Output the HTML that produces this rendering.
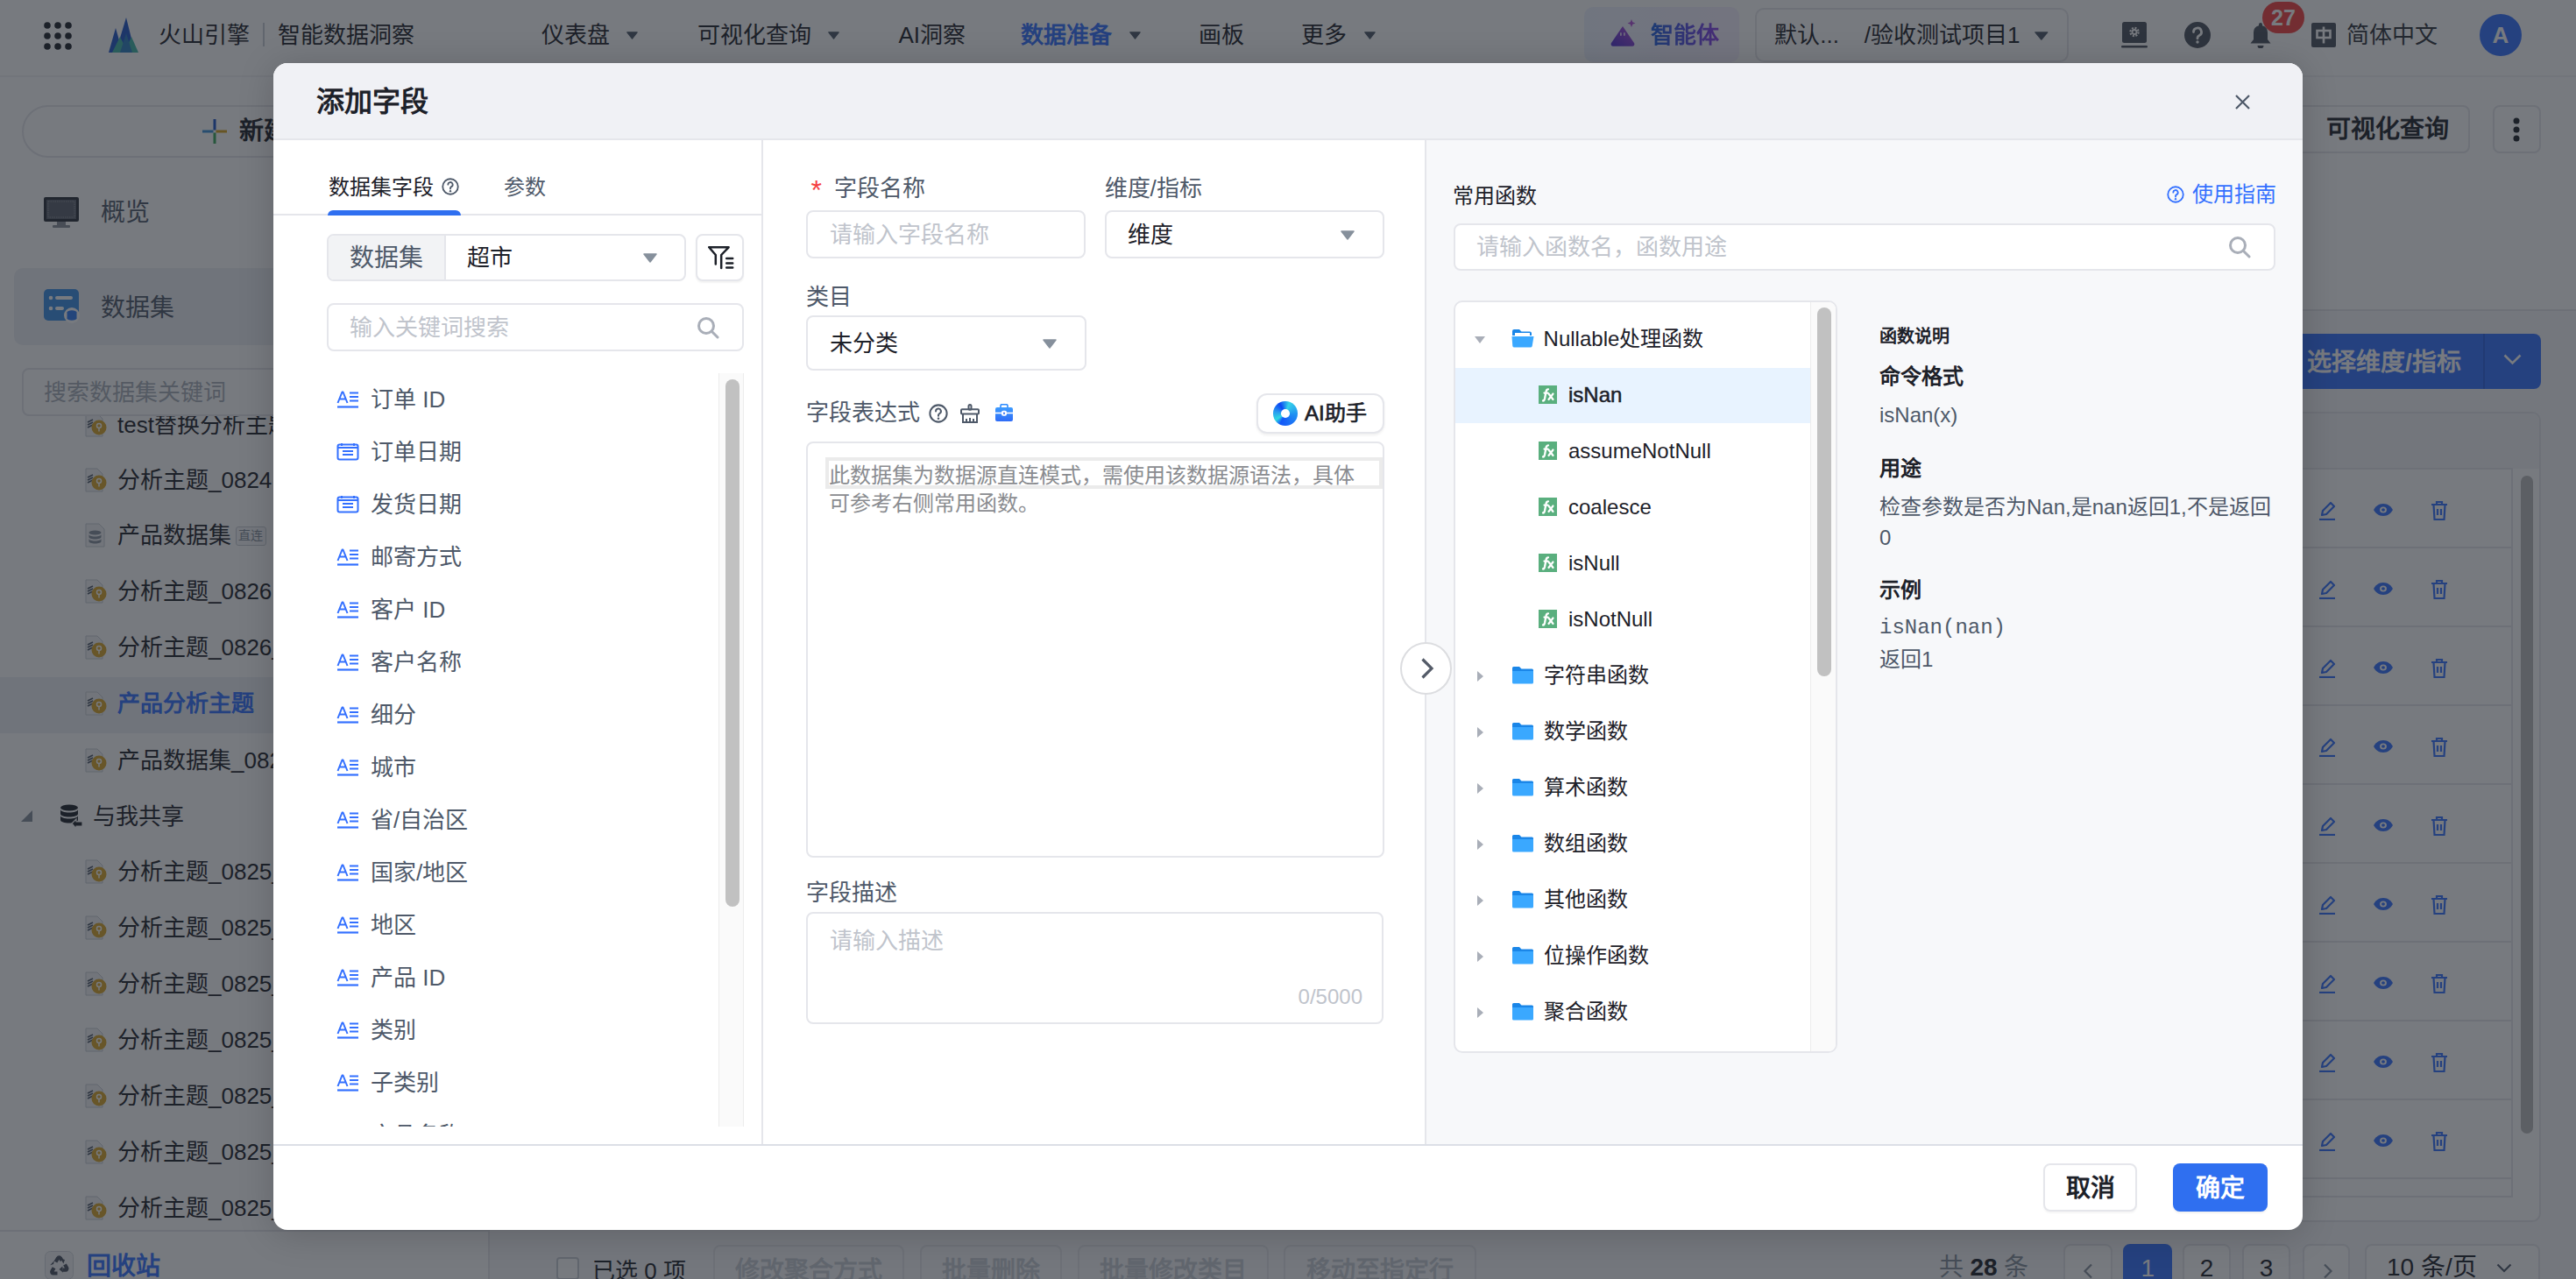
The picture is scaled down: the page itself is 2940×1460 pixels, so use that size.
<!DOCTYPE html>
<html lang="zh-CN"><head><meta charset="utf-8">
<style>
*{box-sizing:border-box;margin:0;padding:0}
html,body{width:2940px;height:1460px;overflow:hidden;background:#f7f8fa;font-family:"Liberation Sans",sans-serif;color:#1d2129}
.a{position:absolute;white-space:nowrap}
#page{position:absolute;left:0;top:0;width:2940px;height:1460px}
#mask{position:absolute;left:0;top:0;width:2940px;height:1460px;background:rgba(29,33,41,0.6)}
#modal{position:absolute;left:312px;top:72px;width:2316px;height:1332px;background:#fff;border-radius:16px;overflow:hidden;box-shadow:0 4px 40px rgba(0,0,0,0.18)}
</style></head><body>
<div id="page">
  <!-- NAV -->
  <div class="a" style="left:0;top:0;width:2940px;height:88px;background:#fff;border-bottom:2px solid #f2f3f5"></div>
  <!-- SIDEBAR -->
  <div class="a" style="left:0;top:88px;width:559px;height:1372px;background:#fff;border-right:2px solid #e5e6eb"></div>
<!--PAGE-CONTENT-->
<svg class="a" style="left:50px;top:24.5px" width="32" height="32" viewBox="0 0 32 32" fill="#1d2129"><circle cx="4" cy="4" r="3.8"/><circle cx="4" cy="16" r="3.8"/><circle cx="4" cy="28" r="3.8"/><circle cx="16" cy="4" r="3.8"/><circle cx="16" cy="16" r="3.8"/><circle cx="16" cy="28" r="3.8"/><circle cx="28" cy="4" r="3.8"/><circle cx="28" cy="16" r="3.8"/><circle cx="28" cy="28" r="3.8"/></svg>
<svg class="a" style="left:124px;top:20px" width="34" height="40" viewBox="0 0 34 40"><path d="M0 40L8 12L16 40z" fill="#1f56c9"/><path d="M8 40L20 0L30 40z" fill="#1f56c9"/><path d="M4 40L13 22L22 40z" fill="#40b5a6"/><path d="M18 40L26 22L34 40z" fill="#40b5a6"/><path d="M13 40L20 18L27 40z" fill="#2c7dbd"/></svg>
<div class="a" style="left:181px;top:20.0px;font-size:26px;line-height:40px;color:#1d2129;font-weight:500;">火山引擎</div>
<div class="a" style="left:300px;top:26px;width:2px;height:27px;background:#c9cdd4"></div>
<div class="a" style="left:317px;top:20.0px;font-size:26px;line-height:40px;color:#1d2129;font-weight:400;">智能数据洞察</div>
<div class="a" style="left:618.4px;top:20.0px;font-size:26px;line-height:40px;color:#1d2129;font-weight:400;">仪表盘</div>
<svg class="a" style="left:715.4px;top:35.5px" width="13" height="9" viewBox="0 0 16 11" preserveAspectRatio="none"><path d="M1 1h14l-7 9z" fill="#4e5969" stroke="#4e5969" stroke-width="1.5" stroke-linejoin="round"/></svg>
<div class="a" style="left:796px;top:20.0px;font-size:26px;line-height:40px;color:#1d2129;font-weight:400;">可视化查询</div>
<svg class="a" style="left:945px;top:35.5px" width="13" height="9" viewBox="0 0 16 11" preserveAspectRatio="none"><path d="M1 1h14l-7 9z" fill="#4e5969" stroke="#4e5969" stroke-width="1.5" stroke-linejoin="round"/></svg>
<div class="a" style="left:1025.5px;top:20.0px;font-size:26px;line-height:40px;color:#1d2129;font-weight:400;">AI洞察</div>
<div class="a" style="left:1165px;top:20.0px;font-size:26px;line-height:40px;color:#3370ff;font-weight:600;">数据准备</div>
<svg class="a" style="left:1289px;top:35.5px" width="13" height="9" viewBox="0 0 16 11" preserveAspectRatio="none"><path d="M1 1h14l-7 9z" fill="#4e5969" stroke="#4e5969" stroke-width="1.5" stroke-linejoin="round"/></svg>
<div class="a" style="left:1368px;top:20.0px;font-size:26px;line-height:40px;color:#1d2129;font-weight:400;">画板</div>
<div class="a" style="left:1485.2px;top:20.0px;font-size:26px;line-height:40px;color:#1d2129;font-weight:400;">更多</div>
<svg class="a" style="left:1557px;top:35.5px" width="13" height="9" viewBox="0 0 16 11" preserveAspectRatio="none"><path d="M1 1h14l-7 9z" fill="#4e5969" stroke="#4e5969" stroke-width="1.5" stroke-linejoin="round"/></svg>
<div class="a" style="left:1808px;top:8px;width:177px;height:63px;border-radius:10px;background:linear-gradient(90deg,#eef3ff,#f5efff)"></div>
<svg class="a" style="left:1838px;top:21.5px" width="29" height="31" viewBox="0 0 29 31"><defs><linearGradient id="ag" x1="0" y1="1" x2="1" y2="0"><stop offset="0" stop-color="#4b2fd0"/><stop offset="1" stop-color="#b04fd8"/></linearGradient></defs><path d="M14 8L1 27a2.5 2.5 0 0 0 2 3.8h22a2.5 2.5 0 0 0 2-3.8z" fill="url(#ag)"/><path d="M24 0l1.3 3.2L28.5 4.5l-3.2 1.3L24 9l-1.3-3.2L19.5 4.5l3.2-1.3z" fill="#b04fd8"/><rect x="11" y="15" width="1.8" height="4" rx="0.9" fill="#fff" opacity="0.8"/><rect x="15" y="15" width="1.8" height="4" rx="0.9" fill="#fff" opacity="0.8"/></svg>
<div class="a" style="left:1884px;top:19.6px;font-size:26px;line-height:40px;color:#5a3fe0;font-weight:700;background:linear-gradient(90deg,#1e62e0,#8a3ee8);-webkit-background-clip:text;background-clip:text;-webkit-text-fill-color:transparent;">智能体</div>
<div class="a" style="left:2003px;top:8.7px;width:358px;height:62.3px;border:2px solid #e5e6eb;border-radius:10px;background:#fff"></div>
<div class="a" style="left:2025.2px;top:20.0px;font-size:26px;line-height:40px;color:#1d2129;font-weight:400;">默认...&nbsp;&nbsp;&nbsp;&nbsp;/验收测试项目1</div>
<svg class="a" style="left:2322px;top:35.5px" width="15.7" height="10" viewBox="0 0 16 11" preserveAspectRatio="none"><path d="M1 1h14l-7 9z" fill="#4e5969" stroke="#4e5969" stroke-width="1.5" stroke-linejoin="round"/></svg>
<svg class="a" style="left:2421px;top:24.8px" width="30" height="30" viewBox="0 0 30 30"><rect x="1" y="0" width="28" height="24" rx="2.5" fill="#4a505c"/><rect x="0" y="27" width="30" height="2.6" rx="1.3" fill="#4a505c"/><circle cx="15" cy="11.5" r="4.6" fill="none" stroke="#fff" stroke-width="2.2" stroke-dasharray="2 1.6"/><circle cx="15" cy="11.5" r="3.4" fill="#fff"/><circle cx="15" cy="11.5" r="1.5" fill="#4a505c"/></svg>
<svg class="a" style="left:2493px;top:24.8px" width="30" height="30" viewBox="0 0 30 30"><circle cx="15" cy="15" r="15" fill="#4a505c"/><path d="M10.5 11.5a4.5 4.5 0 1 1 6.5 4c-1.3.7-2 1.4-2 2.8v.6" fill="none" stroke="#fff" stroke-width="2.8" stroke-linecap="round"/><circle cx="15" cy="23" r="1.7" fill="#fff"/></svg>
<svg class="a" style="left:2568px;top:25px" width="24" height="30" viewBox="0 0 24 30"><path d="M12 1a2 2 0 0 1 2 2v1.2a8 8 0 0 1 6 7.8v8l3.5 4.5H0.5L4 20v-8a8 8 0 0 1 6-7.8V3a2 2 0 0 1 2-2z" fill="#4a505c"/><path d="M8.5 27h7a3.5 3.5 0 0 1-7 0z" fill="#4a505c"/></svg>
<div class="a" style="left:2582px;top:2px;width:48px;height:36px;border-radius:18px;background:#f53f3f;color:#fff;font-size:25px;font-weight:700;line-height:36px;text-align:center">27</div>
<div class="a" style="left:2638px;top:25.8px;width:28px;height:28px;border-radius:2px;background:#4a505c"></div>
<svg class="a" style="left:2638px;top:25.8px" width="28" height="28" viewBox="0 0 28 28" fill="none" stroke="#fff" stroke-width="2.6"><rect x="6.5" y="9" width="15" height="8"/><path d="M14 4.5v19"/></svg>
<div class="a" style="left:2678px;top:20.0px;font-size:26px;line-height:40px;color:#2e333b;font-weight:400;">简体中文</div>
<div class="a" style="left:2830px;top:16px;width:48px;height:48px;border-radius:50%;background:#3370ff;color:#fff;font-size:26px;line-height:48px;text-align:center;font-weight:600">A</div>
<div class="a" style="left:24.5px;top:120px;width:510px;height:60px;border:2px solid #e5e6eb;border-radius:30px;background:#fff"></div>
<svg class="a" style="left:231px;top:135.5px" width="28" height="28" viewBox="0 0 28 28"><rect x="12.5" y="0" width="3" height="12.5" fill="#1f56c9"/><rect x="15.5" y="12.5" width="12.5" height="3" fill="#d8a21c"/><rect x="12.5" y="15.5" width="3" height="12.5" fill="#3aa85a"/><rect x="0" y="12.5" width="12.5" height="3" fill="#3a8fd8"/></svg>
<div class="a" style="left:273px;top:129.5px;font-size:28px;line-height:40px;color:#1d2129;font-weight:700;">新建数据集</div>
<svg class="a" style="left:50px;top:225px" width="40" height="35" viewBox="0 0 40 35"><rect x="0" y="0" width="40" height="28" rx="2" fill="#2a2f38"/><rect x="3" y="3" width="34" height="22" fill="#5a606b"/><rect x="5" y="5" width="30" height="18" fill="none" stroke="#9aa0a8" stroke-width="0.8" stroke-dasharray="1.5 1"/><rect x="15" y="28" width="10" height="4" fill="#8a9099"/><rect x="10" y="32" width="20" height="3" rx="1" fill="#8a9099"/></svg>
<div class="a" style="left:115px;top:222.5px;font-size:28px;line-height:40px;color:#4e5969;font-weight:400;">概览</div>
<div class="a" style="left:16px;top:306px;width:600px;height:87.5px;border-radius:10px;background:#eef0f4"></div>
<svg class="a" style="left:50px;top:330px" width="42" height="40" viewBox="0 0 42 40"><rect x="0" y="0" width="40" height="36" rx="5" fill="#3a8ee6"/><circle cx="8" cy="10" r="2.3" fill="#fff"/><rect x="13" y="8" width="20" height="4" rx="2" fill="#fff"/><circle cx="8" cy="22" r="2.3" fill="#fff"/><rect x="13" y="20" width="10" height="4" rx="2" fill="#fff"/><circle cx="32" cy="30" r="9" fill="#fff"/><ellipse cx="32" cy="26.5" rx="5.5" ry="2.2" fill="#2e7cf6"/><rect x="26.5" y="26.5" width="11" height="7" fill="#2e7cf6"/><ellipse cx="32" cy="33.5" rx="5.5" ry="2.2" fill="#2e7cf6"/></svg>
<div class="a" style="left:115px;top:331.5px;font-size:28px;line-height:40px;color:#4e5969;font-weight:400;">数据集</div>
<div class="a" style="left:0;top:475px;width:559px;height:929px;overflow:hidden">
<div class="a" style="left:0;top:297.5px;width:559px;height:64px;background:#eef0f4"></div>
<svg class="a" style="left:96px;top:-4px" width="27" height="28" viewBox="0 0 27 28"><path d="M2 1h13l6 6v20H2z" fill="#f2f3f5" stroke="#c9cdd4" stroke-width="1"/><path d="M4 11l6-3M4 14l6-3M4 17l6-3" stroke="#4e5969" stroke-width="1.6"/><circle cx="17" cy="17" r="8.5" fill="#d9a628"/><circle cx="17" cy="15" r="2.5" fill="none" stroke="#fff" stroke-width="1.5"/><path d="M17 17.5v4" stroke="#fff" stroke-width="1.5"/></svg>
<div class="a" style="left:134px;top:-10.0px;font-size:26px;line-height:40px;color:#1d2129;font-weight:400;">test替换分析主题</div>
<svg class="a" style="left:96px;top:58.5px" width="27" height="28" viewBox="0 0 27 28"><path d="M2 1h13l6 6v20H2z" fill="#f2f3f5" stroke="#c9cdd4" stroke-width="1"/><path d="M4 11l6-3M4 14l6-3M4 17l6-3" stroke="#4e5969" stroke-width="1.6"/><circle cx="17" cy="17" r="8.5" fill="#d9a628"/><circle cx="17" cy="15" r="2.5" fill="none" stroke="#fff" stroke-width="1.5"/><path d="M17 17.5v4" stroke="#fff" stroke-width="1.5"/></svg>
<div class="a" style="left:134px;top:52.5px;font-size:26px;line-height:40px;color:#1d2129;font-weight:400;">分析主题_0824</div>
<svg class="a" style="left:96px;top:122px" width="27" height="28" viewBox="0 0 27 28"><path d="M2 1h15l6 6v20H2z" fill="#f2f3f5" stroke="#c9cdd4" stroke-width="1"/><ellipse cx="12.5" cy="11" rx="7" ry="2.5" fill="#86909c"/><path d="M5.5 13c0 1.4 3 2.5 7 2.5s7-1.1 7-2.5v3c0 1.4-3 2.5-7 2.5s-7-1.1-7-2.5z" fill="#86909c"/><path d="M5.5 18c0 1.4 3 2.5 7 2.5s7-1.1 7-2.5v3c0 1.4-3 2.5-7 2.5s-7-1.1-7-2.5z" fill="#86909c"/></svg>
<div class="a" style="left:134px;top:116.0px;font-size:26px;line-height:40px;color:#1d2129;font-weight:400;">产品数据集</div>
<svg class="a" style="left:96px;top:186px" width="27" height="28" viewBox="0 0 27 28"><path d="M2 1h13l6 6v20H2z" fill="#f2f3f5" stroke="#c9cdd4" stroke-width="1"/><path d="M4 11l6-3M4 14l6-3M4 17l6-3" stroke="#4e5969" stroke-width="1.6"/><circle cx="17" cy="17" r="8.5" fill="#d9a628"/><circle cx="17" cy="15" r="2.5" fill="none" stroke="#fff" stroke-width="1.5"/><path d="M17 17.5v4" stroke="#fff" stroke-width="1.5"/></svg>
<div class="a" style="left:134px;top:180.0px;font-size:26px;line-height:40px;color:#1d2129;font-weight:400;">分析主题_0826</div>
<svg class="a" style="left:96px;top:250px" width="27" height="28" viewBox="0 0 27 28"><path d="M2 1h13l6 6v20H2z" fill="#f2f3f5" stroke="#c9cdd4" stroke-width="1"/><path d="M4 11l6-3M4 14l6-3M4 17l6-3" stroke="#4e5969" stroke-width="1.6"/><circle cx="17" cy="17" r="8.5" fill="#d9a628"/><circle cx="17" cy="15" r="2.5" fill="none" stroke="#fff" stroke-width="1.5"/><path d="M17 17.5v4" stroke="#fff" stroke-width="1.5"/></svg>
<div class="a" style="left:134px;top:244.0px;font-size:26px;line-height:40px;color:#1d2129;font-weight:400;">分析主题_0826_1</div>
<svg class="a" style="left:96px;top:314px" width="27" height="28" viewBox="0 0 27 28"><path d="M2 1h13l6 6v20H2z" fill="#f2f3f5" stroke="#c9cdd4" stroke-width="1"/><path d="M4 11l6-3M4 14l6-3M4 17l6-3" stroke="#4e5969" stroke-width="1.6"/><circle cx="17" cy="17" r="8.5" fill="#d9a628"/><circle cx="17" cy="15" r="2.5" fill="none" stroke="#fff" stroke-width="1.5"/><path d="M17 17.5v4" stroke="#fff" stroke-width="1.5"/></svg>
<div class="a" style="left:134px;top:308.0px;font-size:26px;line-height:40px;color:#3370ff;font-weight:700;">产品分析主题</div>
<svg class="a" style="left:96px;top:378.70000000000005px" width="27" height="28" viewBox="0 0 27 28"><path d="M2 1h13l6 6v20H2z" fill="#f2f3f5" stroke="#c9cdd4" stroke-width="1"/><path d="M4 11l6-3M4 14l6-3M4 17l6-3" stroke="#4e5969" stroke-width="1.6"/><circle cx="17" cy="17" r="8.5" fill="#d9a628"/><circle cx="17" cy="15" r="2.5" fill="none" stroke="#fff" stroke-width="1.5"/><path d="M17 17.5v4" stroke="#fff" stroke-width="1.5"/></svg>
<div class="a" style="left:134px;top:372.7px;font-size:26px;line-height:40px;color:#1d2129;font-weight:400;">产品数据集_0826</div>
<div class="a" style="left:268.5px;top:126px;width:35px;height:22px;border:1.5px solid #c9cdd4;border-radius:3px;font-size:14px;line-height:19px;text-align:center;color:#86909c;background:#f7f8fa">直连</div>
<svg class="a" style="left:24px;top:449.5px" width="13" height="13" viewBox="0 0 13 13"><path d="M13 0v13H0z" fill="#86909c"/></svg>
<svg class="a" style="left:68px;top:443px" width="27" height="28" viewBox="0 0 27 28"><ellipse cx="11" cy="4" rx="10" ry="3.5" fill="#1d2129"/><path d="M1 6c0 2 4.5 3.5 10 3.5S21 8 21 6v5c0 2-4.5 3.5-10 3.5S1 13 1 11z" fill="#1d2129"/><path d="M1 13c0 2 4.5 3.5 10 3.5S21 15 21 13v5c0 2-4.5 3.5-10 3.5S1 20 1 18z" fill="#1d2129"/><path d="M14 22l5-5v3h7v5h-7v3z" fill="#1d2129" stroke="#fff" stroke-width="1.2"/></svg>
<div class="a" style="left:106px;top:436.5px;font-size:26px;line-height:40px;color:#1d2129;font-weight:400;">与我共享</div>
<svg class="a" style="left:96px;top:506px" width="27" height="28" viewBox="0 0 27 28"><path d="M2 1h13l6 6v20H2z" fill="#f2f3f5" stroke="#c9cdd4" stroke-width="1"/><path d="M4 11l6-3M4 14l6-3M4 17l6-3" stroke="#4e5969" stroke-width="1.6"/><circle cx="17" cy="17" r="8.5" fill="#d9a628"/><circle cx="17" cy="15" r="2.5" fill="none" stroke="#fff" stroke-width="1.5"/><path d="M17 17.5v4" stroke="#fff" stroke-width="1.5"/></svg>
<div class="a" style="left:134px;top:500.0px;font-size:26px;line-height:40px;color:#1d2129;font-weight:400;">分析主题_0825_1</div>
<svg class="a" style="left:96px;top:570px" width="27" height="28" viewBox="0 0 27 28"><path d="M2 1h13l6 6v20H2z" fill="#f2f3f5" stroke="#c9cdd4" stroke-width="1"/><path d="M4 11l6-3M4 14l6-3M4 17l6-3" stroke="#4e5969" stroke-width="1.6"/><circle cx="17" cy="17" r="8.5" fill="#d9a628"/><circle cx="17" cy="15" r="2.5" fill="none" stroke="#fff" stroke-width="1.5"/><path d="M17 17.5v4" stroke="#fff" stroke-width="1.5"/></svg>
<div class="a" style="left:134px;top:564.0px;font-size:26px;line-height:40px;color:#1d2129;font-weight:400;">分析主题_0825_2</div>
<svg class="a" style="left:96px;top:634px" width="27" height="28" viewBox="0 0 27 28"><path d="M2 1h13l6 6v20H2z" fill="#f2f3f5" stroke="#c9cdd4" stroke-width="1"/><path d="M4 11l6-3M4 14l6-3M4 17l6-3" stroke="#4e5969" stroke-width="1.6"/><circle cx="17" cy="17" r="8.5" fill="#d9a628"/><circle cx="17" cy="15" r="2.5" fill="none" stroke="#fff" stroke-width="1.5"/><path d="M17 17.5v4" stroke="#fff" stroke-width="1.5"/></svg>
<div class="a" style="left:134px;top:628.0px;font-size:26px;line-height:40px;color:#1d2129;font-weight:400;">分析主题_0825_3</div>
<svg class="a" style="left:96px;top:698px" width="27" height="28" viewBox="0 0 27 28"><path d="M2 1h13l6 6v20H2z" fill="#f2f3f5" stroke="#c9cdd4" stroke-width="1"/><path d="M4 11l6-3M4 14l6-3M4 17l6-3" stroke="#4e5969" stroke-width="1.6"/><circle cx="17" cy="17" r="8.5" fill="#d9a628"/><circle cx="17" cy="15" r="2.5" fill="none" stroke="#fff" stroke-width="1.5"/><path d="M17 17.5v4" stroke="#fff" stroke-width="1.5"/></svg>
<div class="a" style="left:134px;top:692.0px;font-size:26px;line-height:40px;color:#1d2129;font-weight:400;">分析主题_0825_4</div>
<svg class="a" style="left:96px;top:762px" width="27" height="28" viewBox="0 0 27 28"><path d="M2 1h13l6 6v20H2z" fill="#f2f3f5" stroke="#c9cdd4" stroke-width="1"/><path d="M4 11l6-3M4 14l6-3M4 17l6-3" stroke="#4e5969" stroke-width="1.6"/><circle cx="17" cy="17" r="8.5" fill="#d9a628"/><circle cx="17" cy="15" r="2.5" fill="none" stroke="#fff" stroke-width="1.5"/><path d="M17 17.5v4" stroke="#fff" stroke-width="1.5"/></svg>
<div class="a" style="left:134px;top:756.0px;font-size:26px;line-height:40px;color:#1d2129;font-weight:400;">分析主题_0825_5</div>
<svg class="a" style="left:96px;top:826px" width="27" height="28" viewBox="0 0 27 28"><path d="M2 1h13l6 6v20H2z" fill="#f2f3f5" stroke="#c9cdd4" stroke-width="1"/><path d="M4 11l6-3M4 14l6-3M4 17l6-3" stroke="#4e5969" stroke-width="1.6"/><circle cx="17" cy="17" r="8.5" fill="#d9a628"/><circle cx="17" cy="15" r="2.5" fill="none" stroke="#fff" stroke-width="1.5"/><path d="M17 17.5v4" stroke="#fff" stroke-width="1.5"/></svg>
<div class="a" style="left:134px;top:820.0px;font-size:26px;line-height:40px;color:#1d2129;font-weight:400;">分析主题_0825_6</div>
<svg class="a" style="left:96px;top:890px" width="27" height="28" viewBox="0 0 27 28"><path d="M2 1h13l6 6v20H2z" fill="#f2f3f5" stroke="#c9cdd4" stroke-width="1"/><path d="M4 11l6-3M4 14l6-3M4 17l6-3" stroke="#4e5969" stroke-width="1.6"/><circle cx="17" cy="17" r="8.5" fill="#d9a628"/><circle cx="17" cy="15" r="2.5" fill="none" stroke="#fff" stroke-width="1.5"/><path d="M17 17.5v4" stroke="#fff" stroke-width="1.5"/></svg>
<div class="a" style="left:134px;top:884.0px;font-size:26px;line-height:40px;color:#1d2129;font-weight:400;">分析主题_0825_7</div>
</div>
<div class="a" style="left:25px;top:420px;width:520px;height:55px;border:2px solid #e5e6eb;border-radius:8px;background:#fff"></div>
<div class="a" style="left:50px;top:427.5px;font-size:26px;line-height:40px;color:#a9aeb8;font-weight:400;">搜索数据集关键词</div>
<div class="a" style="left:0;top:1404px;width:559px;height:2px;background:#e5e6eb"></div>
<svg class="a" style="left:50.5px;top:1428px" width="33" height="33" viewBox="0 0 33 33"><rect x="0.5" y="0.5" width="32" height="32" rx="6" fill="#f2f3f5" stroke="#d5d8de"/><g fill="none" stroke="#4a5160" stroke-width="4.2" stroke-linejoin="round"><path d="M12.5 12.5l2.6-4.3a1.6 1.6 0 0 1 2.8 0l1.6 2.6"/><path d="M23 15.5l2.2 3.8a1.6 1.6 0 0 1-1.4 2.4h-3.2"/><path d="M14.5 25.5H9.8a1.6 1.6 0 0 1-1.4-2.4l2.2-3.8"/></g><path d="M18 8.5l5 1.5-1.6 4.6z M16.5 21l3.8-3.4 0.8 7.2z M10 15l-3.8 1.2 4.8-5.2z" fill="#4a5160"/></svg>
<div class="a" style="left:99px;top:1425.5px;font-size:28px;line-height:40px;color:#3370ff;font-weight:700;">回收站</div>
<div class="a" style="left:561px;top:88px;width:2379px;height:266.5px;background:#fff;border-bottom:2px solid #e5e6eb"></div>
<div class="a" style="left:2500px;top:120.4px;width:319px;height:54.5px;border:2px solid #e5e6eb;border-radius:8px;background:#fff"></div>
<div class="a" style="left:2655px;top:127.6px;font-size:28px;line-height:40px;color:#1d2129;font-weight:700;">可视化查询</div>
<div class="a" style="left:2844.6px;top:120.4px;width:55px;height:54.5px;border:2px solid #e5e6eb;border-radius:8px;background:#fff"></div>
<svg class="a" style="left:2867px;top:134px" width="10" height="28" viewBox="0 0 10 28" fill="#1d2129"><circle cx="5" cy="4" r="3.5"/><circle cx="5" cy="14" r="3.5"/><circle cx="5" cy="24" r="3.5"/></svg>
<div class="a" style="left:2400px;top:380.7px;width:499.6px;height:63px;border-radius:8px;background:#3370ff"></div>
<div class="a" style="left:2834px;top:380.7px;width:2px;height:63px;background:#2a5fe0"></div>
<div class="a" style="left:2633px;top:394.0px;font-size:28px;line-height:40px;color:#fff;font-weight:700;">选择维度/指标</div>
<svg class="a" style="left:2856.7px;top:404px" width="21" height="13" viewBox="0 0 21 13" fill="none" stroke="#fff" stroke-width="2.6"><path d="M1.5 1.5l9 9 9-9"/></svg>
<div class="a" style="left:2400px;top:469.8px;width:499.5px;height:925.2px;border:2px solid #e5e6eb;border-radius:10px;background:#fff"></div>
<div class="a" style="left:2400px;top:471.8px;width:497.5px;height:63px;background:#f4f5f8;border-radius:0 8px 0 0"></div>
<div class="a" style="left:2400px;top:534px;width:468px;height:833px;border-top:2px solid #e5e6eb;border-right:2px solid #e5e6eb;border-bottom:2px solid #e5e6eb"></div>
<div class="a" style="left:2400px;top:624px;width:468px;height:2px;background:#e5e6eb"></div>
<div class="a" style="left:2400px;top:714px;width:468px;height:2px;background:#e5e6eb"></div>
<div class="a" style="left:2400px;top:804px;width:468px;height:2px;background:#e5e6eb"></div>
<div class="a" style="left:2400px;top:894px;width:468px;height:2px;background:#e5e6eb"></div>
<div class="a" style="left:2400px;top:984px;width:468px;height:2px;background:#e5e6eb"></div>
<div class="a" style="left:2400px;top:1074px;width:468px;height:2px;background:#e5e6eb"></div>
<div class="a" style="left:2400px;top:1164px;width:468px;height:2px;background:#e5e6eb"></div>
<div class="a" style="left:2400px;top:1254px;width:468px;height:2px;background:#e5e6eb"></div>
<div class="a" style="left:2400px;top:1344px;width:468px;height:2px;background:#e5e6eb"></div>
<svg class="a" style="left:2646px;top:572.0px" width="20" height="22" viewBox="0 0 20 22" fill="none" stroke="#3370ff" stroke-width="2.2"><path d="M4 16l1-5L14 2l4 4-9 9z" stroke-linejoin="round"/><path d="M1 21h18"/></svg>
<svg class="a" style="left:2708px;top:573.5px" width="24" height="16" viewBox="0 0 22 16" preserveAspectRatio="none"><path d="M11 1C6 1 2.5 4.5 1 8c1.5 3.5 5 7 10 7s8.5-3.5 10-7C19.5 4.5 16 1 11 1z" fill="#3370ff"/><circle cx="11" cy="8" r="3.6" fill="#fff"/><circle cx="11" cy="8" r="1.8" fill="#3370ff"/></svg>
<svg class="a" style="left:2774.4px;top:571.0px" width="20" height="24" viewBox="0 0 20 24" fill="none" stroke="#3370ff" stroke-width="2.2"><path d="M1 5h18M7 5V2h6v3M3.5 5l1 17h11l1-17M8 10v7M12 10v7"/></svg>
<svg class="a" style="left:2646px;top:662.0px" width="20" height="22" viewBox="0 0 20 22" fill="none" stroke="#3370ff" stroke-width="2.2"><path d="M4 16l1-5L14 2l4 4-9 9z" stroke-linejoin="round"/><path d="M1 21h18"/></svg>
<svg class="a" style="left:2708px;top:663.5px" width="24" height="16" viewBox="0 0 22 16" preserveAspectRatio="none"><path d="M11 1C6 1 2.5 4.5 1 8c1.5 3.5 5 7 10 7s8.5-3.5 10-7C19.5 4.5 16 1 11 1z" fill="#3370ff"/><circle cx="11" cy="8" r="3.6" fill="#fff"/><circle cx="11" cy="8" r="1.8" fill="#3370ff"/></svg>
<svg class="a" style="left:2774.4px;top:661.0px" width="20" height="24" viewBox="0 0 20 24" fill="none" stroke="#3370ff" stroke-width="2.2"><path d="M1 5h18M7 5V2h6v3M3.5 5l1 17h11l1-17M8 10v7M12 10v7"/></svg>
<svg class="a" style="left:2646px;top:752.0px" width="20" height="22" viewBox="0 0 20 22" fill="none" stroke="#3370ff" stroke-width="2.2"><path d="M4 16l1-5L14 2l4 4-9 9z" stroke-linejoin="round"/><path d="M1 21h18"/></svg>
<svg class="a" style="left:2708px;top:753.5px" width="24" height="16" viewBox="0 0 22 16" preserveAspectRatio="none"><path d="M11 1C6 1 2.5 4.5 1 8c1.5 3.5 5 7 10 7s8.5-3.5 10-7C19.5 4.5 16 1 11 1z" fill="#3370ff"/><circle cx="11" cy="8" r="3.6" fill="#fff"/><circle cx="11" cy="8" r="1.8" fill="#3370ff"/></svg>
<svg class="a" style="left:2774.4px;top:751.0px" width="20" height="24" viewBox="0 0 20 24" fill="none" stroke="#3370ff" stroke-width="2.2"><path d="M1 5h18M7 5V2h6v3M3.5 5l1 17h11l1-17M8 10v7M12 10v7"/></svg>
<svg class="a" style="left:2646px;top:842.0px" width="20" height="22" viewBox="0 0 20 22" fill="none" stroke="#3370ff" stroke-width="2.2"><path d="M4 16l1-5L14 2l4 4-9 9z" stroke-linejoin="round"/><path d="M1 21h18"/></svg>
<svg class="a" style="left:2708px;top:843.5px" width="24" height="16" viewBox="0 0 22 16" preserveAspectRatio="none"><path d="M11 1C6 1 2.5 4.5 1 8c1.5 3.5 5 7 10 7s8.5-3.5 10-7C19.5 4.5 16 1 11 1z" fill="#3370ff"/><circle cx="11" cy="8" r="3.6" fill="#fff"/><circle cx="11" cy="8" r="1.8" fill="#3370ff"/></svg>
<svg class="a" style="left:2774.4px;top:841.0px" width="20" height="24" viewBox="0 0 20 24" fill="none" stroke="#3370ff" stroke-width="2.2"><path d="M1 5h18M7 5V2h6v3M3.5 5l1 17h11l1-17M8 10v7M12 10v7"/></svg>
<svg class="a" style="left:2646px;top:932.0px" width="20" height="22" viewBox="0 0 20 22" fill="none" stroke="#3370ff" stroke-width="2.2"><path d="M4 16l1-5L14 2l4 4-9 9z" stroke-linejoin="round"/><path d="M1 21h18"/></svg>
<svg class="a" style="left:2708px;top:933.5px" width="24" height="16" viewBox="0 0 22 16" preserveAspectRatio="none"><path d="M11 1C6 1 2.5 4.5 1 8c1.5 3.5 5 7 10 7s8.5-3.5 10-7C19.5 4.5 16 1 11 1z" fill="#3370ff"/><circle cx="11" cy="8" r="3.6" fill="#fff"/><circle cx="11" cy="8" r="1.8" fill="#3370ff"/></svg>
<svg class="a" style="left:2774.4px;top:931.0px" width="20" height="24" viewBox="0 0 20 24" fill="none" stroke="#3370ff" stroke-width="2.2"><path d="M1 5h18M7 5V2h6v3M3.5 5l1 17h11l1-17M8 10v7M12 10v7"/></svg>
<svg class="a" style="left:2646px;top:1022.0px" width="20" height="22" viewBox="0 0 20 22" fill="none" stroke="#3370ff" stroke-width="2.2"><path d="M4 16l1-5L14 2l4 4-9 9z" stroke-linejoin="round"/><path d="M1 21h18"/></svg>
<svg class="a" style="left:2708px;top:1023.5px" width="24" height="16" viewBox="0 0 22 16" preserveAspectRatio="none"><path d="M11 1C6 1 2.5 4.5 1 8c1.5 3.5 5 7 10 7s8.5-3.5 10-7C19.5 4.5 16 1 11 1z" fill="#3370ff"/><circle cx="11" cy="8" r="3.6" fill="#fff"/><circle cx="11" cy="8" r="1.8" fill="#3370ff"/></svg>
<svg class="a" style="left:2774.4px;top:1021.0px" width="20" height="24" viewBox="0 0 20 24" fill="none" stroke="#3370ff" stroke-width="2.2"><path d="M1 5h18M7 5V2h6v3M3.5 5l1 17h11l1-17M8 10v7M12 10v7"/></svg>
<svg class="a" style="left:2646px;top:1112.0px" width="20" height="22" viewBox="0 0 20 22" fill="none" stroke="#3370ff" stroke-width="2.2"><path d="M4 16l1-5L14 2l4 4-9 9z" stroke-linejoin="round"/><path d="M1 21h18"/></svg>
<svg class="a" style="left:2708px;top:1113.5px" width="24" height="16" viewBox="0 0 22 16" preserveAspectRatio="none"><path d="M11 1C6 1 2.5 4.5 1 8c1.5 3.5 5 7 10 7s8.5-3.5 10-7C19.5 4.5 16 1 11 1z" fill="#3370ff"/><circle cx="11" cy="8" r="3.6" fill="#fff"/><circle cx="11" cy="8" r="1.8" fill="#3370ff"/></svg>
<svg class="a" style="left:2774.4px;top:1111.0px" width="20" height="24" viewBox="0 0 20 24" fill="none" stroke="#3370ff" stroke-width="2.2"><path d="M1 5h18M7 5V2h6v3M3.5 5l1 17h11l1-17M8 10v7M12 10v7"/></svg>
<svg class="a" style="left:2646px;top:1202.0px" width="20" height="22" viewBox="0 0 20 22" fill="none" stroke="#3370ff" stroke-width="2.2"><path d="M4 16l1-5L14 2l4 4-9 9z" stroke-linejoin="round"/><path d="M1 21h18"/></svg>
<svg class="a" style="left:2708px;top:1203.5px" width="24" height="16" viewBox="0 0 22 16" preserveAspectRatio="none"><path d="M11 1C6 1 2.5 4.5 1 8c1.5 3.5 5 7 10 7s8.5-3.5 10-7C19.5 4.5 16 1 11 1z" fill="#3370ff"/><circle cx="11" cy="8" r="3.6" fill="#fff"/><circle cx="11" cy="8" r="1.8" fill="#3370ff"/></svg>
<svg class="a" style="left:2774.4px;top:1201.0px" width="20" height="24" viewBox="0 0 20 24" fill="none" stroke="#3370ff" stroke-width="2.2"><path d="M1 5h18M7 5V2h6v3M3.5 5l1 17h11l1-17M8 10v7M12 10v7"/></svg>
<svg class="a" style="left:2646px;top:1292.0px" width="20" height="22" viewBox="0 0 20 22" fill="none" stroke="#3370ff" stroke-width="2.2"><path d="M4 16l1-5L14 2l4 4-9 9z" stroke-linejoin="round"/><path d="M1 21h18"/></svg>
<svg class="a" style="left:2708px;top:1293.5px" width="24" height="16" viewBox="0 0 22 16" preserveAspectRatio="none"><path d="M11 1C6 1 2.5 4.5 1 8c1.5 3.5 5 7 10 7s8.5-3.5 10-7C19.5 4.5 16 1 11 1z" fill="#3370ff"/><circle cx="11" cy="8" r="3.6" fill="#fff"/><circle cx="11" cy="8" r="1.8" fill="#3370ff"/></svg>
<svg class="a" style="left:2774.4px;top:1291.0px" width="20" height="24" viewBox="0 0 20 24" fill="none" stroke="#3370ff" stroke-width="2.2"><path d="M1 5h18M7 5V2h6v3M3.5 5l1 17h11l1-17M8 10v7M12 10v7"/></svg>
<div class="a" style="left:2876.6px;top:543px;width:14.4px;height:751px;border-radius:7px;background:#bcbcbc"></div>
<div class="a" style="left:634.7px;top:1435px;width:26.3px;height:26px;border:2px solid #c9cdd4;border-radius:4px;background:#fff"></div>
<div class="a" style="left:676px;top:1431.0px;font-size:26px;line-height:40px;color:#1d2129;font-weight:400;">已选 0 项</div>
<div class="a" style="left:813.5px;top:1420.8px;width:218.9px;height:56px;border:2px solid #e5e6eb;border-radius:8px;background:#f7f8fa;font-size:28px;font-weight:700;line-height:56px;text-align:center;color:#c9cdd4">修改聚合方式</div>
<div class="a" style="left:1050px;top:1420.8px;width:162.0px;height:56px;border:2px solid #e5e6eb;border-radius:8px;background:#f7f8fa;font-size:28px;font-weight:700;line-height:56px;text-align:center;color:#c9cdd4">批量删除</div>
<div class="a" style="left:1230px;top:1420.8px;width:218.0px;height:56px;border:2px solid #e5e6eb;border-radius:8px;background:#f7f8fa;font-size:28px;font-weight:700;line-height:56px;text-align:center;color:#c9cdd4">批量修改类目</div>
<div class="a" style="left:1464.5px;top:1420.8px;width:220.0px;height:56px;border:2px solid #e5e6eb;border-radius:8px;background:#f7f8fa;font-size:28px;font-weight:700;line-height:56px;text-align:center;color:#c9cdd4">移动至指定行</div>
<div class="a" style="left:2212.7px;top:1427.0px;font-size:28px;line-height:40px;color:#86909c;font-weight:400;">共 <b style="color:#1d2129">28</b> 条</div>
<div class="a" style="left:2355px;top:1420px;width:56.0px;height:56px;border:2px solid #e5e6eb;border-radius:8px;background:#fff;font-size:28px;line-height:52px;text-align:center;color:#86909c"><svg style="position:absolute;left:20px;top:20px" width="12" height="18" viewBox="0 0 12 18" fill="none" stroke="#86909c" stroke-width="2.2"><path d="M10 1.5L2.5 9l7.5 7.5"/></svg></div>
<div class="a" style="left:2423.4px;top:1420px;width:55.9px;height:56px;border:2px solid #3370ff;border-radius:8px;background:#3370ff;font-size:28px;line-height:52px;text-align:center;color:#fff">1</div>
<div class="a" style="left:2491px;top:1420px;width:55.0px;height:56px;border:2px solid #e5e6eb;border-radius:8px;background:#fff;font-size:28px;line-height:52px;text-align:center;color:#1d2129">2</div>
<div class="a" style="left:2559px;top:1420px;width:55.0px;height:56px;border:2px solid #e5e6eb;border-radius:8px;background:#fff;font-size:28px;line-height:52px;text-align:center;color:#1d2129">3</div>
<div class="a" style="left:2627.5px;top:1420px;width:54.5px;height:56px;border:2px solid #e5e6eb;border-radius:8px;background:#fff;font-size:28px;line-height:52px;text-align:center;color:#86909c"><svg style="position:absolute;left:21px;top:20px" width="12" height="18" viewBox="0 0 12 18" fill="none" stroke="#86909c" stroke-width="2.2"><path d="M2 1.5L9.5 9 2 16.5"/></svg></div>
<div class="a" style="left:2699px;top:1420px;width:200px;height:56px;border:2px solid #e5e6eb;border-radius:8px;background:#fff"></div>
<div class="a" style="left:2724px;top:1427.0px;font-size:28px;line-height:40px;color:#1d2129;font-weight:400;">10 条/页</div>
<svg class="a" style="left:2849px;top:1442px" width="18" height="11" viewBox="0 0 18 11" fill="none" stroke="#4e5969" stroke-width="2.2"><path d="M1.5 1.5l7.5 7.5 7.5-7.5"/></svg>
<!--/PAGE-CONTENT-->
</div>
<div id="mask"></div>
<div id="modal">
  <div class="a" style="left:0;top:0;width:2316px;height:88px;background:#f0f1f5;border-bottom:2px solid #e5e6eb"></div>
  <div class="a" style="left:1314px;top:88px;width:1002px;height:1147px;background:#f7f8fa;border-left:2px solid #e5e6eb"></div>
  <div class="a" style="left:557px;top:88px;width:2px;height:1147px;background:#e5e6eb"></div>
  <div class="a" style="left:0;top:1234px;width:2316px;height:2px;background:#dcdfe6"></div>
<!--MODAL-CONTENT-->
<div class="a" style="left:49px;top:21.5px;font-size:32px;line-height:44px;color:#1d2129;font-weight:600;">添加字段</div>
<svg class="a" style="left:2239px;top:36px" width="17" height="17" viewBox="0 0 17 17" stroke="#4e5969" stroke-width="2.2"><path d="M1 1l15 15M16 1L1 16"/></svg>
<div class="a" style="left:63px;top:123.5px;font-size:24px;line-height:36px;color:#1d2129;font-weight:500;">数据集字段</div>
<svg class="a" style="left:191.7px;top:130.7px" width="20" height="20" viewBox="0 0 24 24" fill="none" stroke="#4e5969" stroke-width="2.2"><circle cx="12" cy="12" r="10.5"/><path d="M8.8 9.2a3.2 3.2 0 1 1 4.6 2.9c-.9.5-1.4 1-1.4 2v1" stroke-linecap="round"/><circle cx="12" cy="18.2" r="1.4" fill="#4e5969" stroke="none"/></svg>
<div class="a" style="left:263px;top:123.5px;font-size:24px;line-height:36px;color:#4e5969;font-weight:400;">参数</div>
<div class="a" style="left:0;top:172px;width:557px;height:2px;background:#e5e6eb"></div>
<div class="a" style="left:62px;top:168px;width:152px;height:6px;background:#2f6ff0;border-radius:6px 6px 0 0"></div>
<div class="a" style="left:61px;top:195px;width:410px;height:54px;border:2px solid #e5e6eb;border-radius:8px;overflow:hidden;background:#fff"><div style="position:absolute;left:0;top:0;width:134px;height:50px;background:#f2f3f5;border-right:2px solid #e5e6eb"></div></div>
<div class="a" style="left:87px;top:203.0px;font-size:28px;line-height:40px;color:#4e5969;font-weight:400;">数据集</div>
<div class="a" style="left:220.6px;top:202.0px;font-size:26px;line-height:40px;color:#1d2129;font-weight:400;">超市</div>
<svg class="a" style="left:421.7px;top:217.4px" width="16" height="11" viewBox="0 0 16 11"><path d="M1 1h14l-7 9z" fill="#86909c" stroke="#86909c" stroke-width="1.5" stroke-linejoin="round"/></svg>
<div class="a" style="left:482px;top:195px;width:55px;height:54px;border:2px solid #e5e6eb;border-radius:8px;background:#fff;box-shadow:0 2px 2px rgba(0,0,0,0.05)"></div>
<svg class="a" style="left:495.6px;top:208.7px" width="32" height="28" viewBox="0 0 32 28" fill="none" stroke="#1d2129" stroke-width="2.5" stroke-linecap="round" stroke-linejoin="round"><path d="M1.2 1.3H23.6L15.2 10V25M1.2 1.3L8.8 10V20.5"/><path d="M21.2 14.1h7M21.2 19.4h7M21.2 24.6h7"/></svg>
<div class="a" style="left:61px;top:274px;width:476px;height:55px;border:2px solid #e5e6eb;border-radius:8px;background:#fff"></div>
<div class="a" style="left:87px;top:281.5px;font-size:26px;line-height:40px;color:#c0c4cc;font-weight:400;">输入关键词搜索</div>
<svg class="a" style="left:483px;top:289px" width="26" height="26" viewBox="0 0 26 26" fill="none" stroke="#a9aeb8" stroke-width="3"><circle cx="11" cy="11" r="8.5"/><path d="M17.5 17.5l6.5 6.5" stroke-linecap="round"/></svg>
<div class="a" style="left:0;top:354px;width:557px;height:860px;overflow:hidden">
<svg class="a" style="left:71.6px;top:20px" width="26" height="20" viewBox="0 0 26 20" fill="none" stroke="#3370ff" stroke-width="2"><path d="M1.5 14L6.5 1.5h1L12.5 14M3.5 9.5h7" stroke-linejoin="round"/><path d="M15 2.5h10M15 7h10M15 11.5h10"/><path d="M1 18.5h24" stroke-width="2.2"/></svg>
<div class="a" style="left:111px;top:10.0px;font-size:26px;line-height:40px;color:#4e5969;font-weight:400;">订单 ID</div>
<svg class="a" style="left:71.6px;top:79px" width="26" height="21" viewBox="0 0 26 21" fill="none" stroke="#3370ff" stroke-width="2"><rect x="1.5" y="2.5" width="23" height="17" rx="2"/><path d="M6 1v3M20 1v3M1.5 6h23M7 10h12M7 14h12"/></svg>
<div class="a" style="left:111px;top:70.0px;font-size:26px;line-height:40px;color:#4e5969;font-weight:400;">订单日期</div>
<svg class="a" style="left:71.6px;top:139px" width="26" height="21" viewBox="0 0 26 21" fill="none" stroke="#3370ff" stroke-width="2"><rect x="1.5" y="2.5" width="23" height="17" rx="2"/><path d="M6 1v3M20 1v3M1.5 6h23M7 10h12M7 14h12"/></svg>
<div class="a" style="left:111px;top:130.0px;font-size:26px;line-height:40px;color:#4e5969;font-weight:400;">发货日期</div>
<svg class="a" style="left:71.6px;top:200px" width="26" height="20" viewBox="0 0 26 20" fill="none" stroke="#3370ff" stroke-width="2"><path d="M1.5 14L6.5 1.5h1L12.5 14M3.5 9.5h7" stroke-linejoin="round"/><path d="M15 2.5h10M15 7h10M15 11.5h10"/><path d="M1 18.5h24" stroke-width="2.2"/></svg>
<div class="a" style="left:111px;top:190.0px;font-size:26px;line-height:40px;color:#4e5969;font-weight:400;">邮寄方式</div>
<svg class="a" style="left:71.6px;top:260px" width="26" height="20" viewBox="0 0 26 20" fill="none" stroke="#3370ff" stroke-width="2"><path d="M1.5 14L6.5 1.5h1L12.5 14M3.5 9.5h7" stroke-linejoin="round"/><path d="M15 2.5h10M15 7h10M15 11.5h10"/><path d="M1 18.5h24" stroke-width="2.2"/></svg>
<div class="a" style="left:111px;top:250.0px;font-size:26px;line-height:40px;color:#4e5969;font-weight:400;">客户 ID</div>
<svg class="a" style="left:71.6px;top:320px" width="26" height="20" viewBox="0 0 26 20" fill="none" stroke="#3370ff" stroke-width="2"><path d="M1.5 14L6.5 1.5h1L12.5 14M3.5 9.5h7" stroke-linejoin="round"/><path d="M15 2.5h10M15 7h10M15 11.5h10"/><path d="M1 18.5h24" stroke-width="2.2"/></svg>
<div class="a" style="left:111px;top:310.0px;font-size:26px;line-height:40px;color:#4e5969;font-weight:400;">客户名称</div>
<svg class="a" style="left:71.6px;top:380px" width="26" height="20" viewBox="0 0 26 20" fill="none" stroke="#3370ff" stroke-width="2"><path d="M1.5 14L6.5 1.5h1L12.5 14M3.5 9.5h7" stroke-linejoin="round"/><path d="M15 2.5h10M15 7h10M15 11.5h10"/><path d="M1 18.5h24" stroke-width="2.2"/></svg>
<div class="a" style="left:111px;top:370.0px;font-size:26px;line-height:40px;color:#4e5969;font-weight:400;">细分</div>
<svg class="a" style="left:71.6px;top:440px" width="26" height="20" viewBox="0 0 26 20" fill="none" stroke="#3370ff" stroke-width="2"><path d="M1.5 14L6.5 1.5h1L12.5 14M3.5 9.5h7" stroke-linejoin="round"/><path d="M15 2.5h10M15 7h10M15 11.5h10"/><path d="M1 18.5h24" stroke-width="2.2"/></svg>
<div class="a" style="left:111px;top:430.0px;font-size:26px;line-height:40px;color:#4e5969;font-weight:400;">城市</div>
<svg class="a" style="left:71.6px;top:500px" width="26" height="20" viewBox="0 0 26 20" fill="none" stroke="#3370ff" stroke-width="2"><path d="M1.5 14L6.5 1.5h1L12.5 14M3.5 9.5h7" stroke-linejoin="round"/><path d="M15 2.5h10M15 7h10M15 11.5h10"/><path d="M1 18.5h24" stroke-width="2.2"/></svg>
<div class="a" style="left:111px;top:490.0px;font-size:26px;line-height:40px;color:#4e5969;font-weight:400;">省/自治区</div>
<svg class="a" style="left:71.6px;top:560px" width="26" height="20" viewBox="0 0 26 20" fill="none" stroke="#3370ff" stroke-width="2"><path d="M1.5 14L6.5 1.5h1L12.5 14M3.5 9.5h7" stroke-linejoin="round"/><path d="M15 2.5h10M15 7h10M15 11.5h10"/><path d="M1 18.5h24" stroke-width="2.2"/></svg>
<div class="a" style="left:111px;top:550.0px;font-size:26px;line-height:40px;color:#4e5969;font-weight:400;">国家/地区</div>
<svg class="a" style="left:71.6px;top:620px" width="26" height="20" viewBox="0 0 26 20" fill="none" stroke="#3370ff" stroke-width="2"><path d="M1.5 14L6.5 1.5h1L12.5 14M3.5 9.5h7" stroke-linejoin="round"/><path d="M15 2.5h10M15 7h10M15 11.5h10"/><path d="M1 18.5h24" stroke-width="2.2"/></svg>
<div class="a" style="left:111px;top:610.0px;font-size:26px;line-height:40px;color:#4e5969;font-weight:400;">地区</div>
<svg class="a" style="left:71.6px;top:680px" width="26" height="20" viewBox="0 0 26 20" fill="none" stroke="#3370ff" stroke-width="2"><path d="M1.5 14L6.5 1.5h1L12.5 14M3.5 9.5h7" stroke-linejoin="round"/><path d="M15 2.5h10M15 7h10M15 11.5h10"/><path d="M1 18.5h24" stroke-width="2.2"/></svg>
<div class="a" style="left:111px;top:670.0px;font-size:26px;line-height:40px;color:#4e5969;font-weight:400;">产品 ID</div>
<svg class="a" style="left:71.6px;top:740px" width="26" height="20" viewBox="0 0 26 20" fill="none" stroke="#3370ff" stroke-width="2"><path d="M1.5 14L6.5 1.5h1L12.5 14M3.5 9.5h7" stroke-linejoin="round"/><path d="M15 2.5h10M15 7h10M15 11.5h10"/><path d="M1 18.5h24" stroke-width="2.2"/></svg>
<div class="a" style="left:111px;top:730.0px;font-size:26px;line-height:40px;color:#4e5969;font-weight:400;">类别</div>
<svg class="a" style="left:71.6px;top:800px" width="26" height="20" viewBox="0 0 26 20" fill="none" stroke="#3370ff" stroke-width="2"><path d="M1.5 14L6.5 1.5h1L12.5 14M3.5 9.5h7" stroke-linejoin="round"/><path d="M15 2.5h10M15 7h10M15 11.5h10"/><path d="M1 18.5h24" stroke-width="2.2"/></svg>
<div class="a" style="left:111px;top:790.0px;font-size:26px;line-height:40px;color:#4e5969;font-weight:400;">子类别</div>
<svg class="a" style="left:71.6px;top:860px" width="26" height="20" viewBox="0 0 26 20" fill="none" stroke="#3370ff" stroke-width="2"><path d="M1.5 14L6.5 1.5h1L12.5 14M3.5 9.5h7" stroke-linejoin="round"/><path d="M15 2.5h10M15 7h10M15 11.5h10"/><path d="M1 18.5h24" stroke-width="2.2"/></svg>
<div class="a" style="left:111px;top:850.0px;font-size:26px;line-height:40px;color:#4e5969;font-weight:400;">产品名称</div>
<div class="a" style="left:508px;top:0;width:29px;height:860px;background:#fafafa;border-left:1px solid #ececec;border-right:1px solid #ececec"></div>
<div class="a" style="left:516px;top:7px;width:16px;height:602px;background:#c1c1c1;border-radius:8px"></div>
</div>
<div class="a" style="left:613.5px;top:125.0px;font-size:32px;line-height:40px;color:#f53f3f;font-weight:400;">*</div>
<div class="a" style="left:640px;top:123.0px;font-size:26px;line-height:40px;color:#4e5969;font-weight:400;">字段名称</div>
<div class="a" style="left:948.5px;top:123.0px;font-size:26px;line-height:40px;color:#4e5969;font-weight:400;">维度/指标</div>
<div class="a" style="left:608px;top:168px;width:319px;height:55px;border:2px solid #e5e6eb;border-radius:8px;background:#fff"></div>
<div class="a" style="left:635px;top:175.5px;font-size:26px;line-height:40px;color:#c0c4cc;font-weight:400;">请输入字段名称</div>
<div class="a" style="left:948.5px;top:168px;width:319px;height:55px;border:2px solid #e5e6eb;border-radius:8px;background:#fff"></div>
<div class="a" style="left:975px;top:175.5px;font-size:26px;line-height:40px;color:#1d2129;font-weight:400;">维度</div>
<svg class="a" style="left:1218px;top:190.5px" width="16" height="11" viewBox="0 0 16 11"><path d="M1 1h14l-7 9z" fill="#86909c" stroke="#86909c" stroke-width="1.5" stroke-linejoin="round"/></svg>
<div class="a" style="left:608px;top:246.5px;font-size:26px;line-height:40px;color:#4e5969;font-weight:400;">类目</div>
<div class="a" style="left:608px;top:288px;width:320px;height:63px;border:2px solid #e5e6eb;border-radius:8px;background:#fff"></div>
<div class="a" style="left:635px;top:300.0px;font-size:26px;line-height:40px;color:#1d2129;font-weight:400;">未分类</div>
<svg class="a" style="left:878px;top:314.5px" width="16" height="11" viewBox="0 0 16 11"><path d="M1 1h14l-7 9z" fill="#86909c" stroke="#86909c" stroke-width="1.5" stroke-linejoin="round"/></svg>
<div class="a" style="left:608px;top:379.0px;font-size:26px;line-height:40px;color:#4e5969;font-weight:400;">字段表达式</div>
<svg class="a" style="left:747.9px;top:388.9px" width="22" height="22" viewBox="0 0 24 24" fill="none" stroke="#4e5969" stroke-width="2.2"><circle cx="12" cy="12" r="10.5"/><path d="M8.8 9.2a3.2 3.2 0 1 1 4.6 2.9c-.9.5-1.4 1-1.4 2v1" stroke-linecap="round"/><circle cx="12" cy="18.2" r="1.4" fill="#4e5969" stroke="none"/></svg>
<svg class="a" style="left:784.2px;top:388.9px" width="22" height="22" viewBox="0 0 22 22" fill="none" stroke="#4e5969" stroke-width="2"><rect x="9.5" y="1" width="3" height="5.8" rx="1.5"/><rect x="1" y="6.3" width="20" height="5.2" rx="1"/><path d="M3 11.5V21h16v-9.5M7 21v-4M11 21v-5M15 21v-4"/></svg>
<svg class="a" style="left:824.1px;top:389px" width="20" height="20" viewBox="0 0 20 20"><defs><linearGradient id="tb" x1="0" y1="0" x2="0" y2="1"><stop offset="0" stop-color="#3d9bff"/><stop offset="1" stop-color="#2f6cf6"/></linearGradient></defs><path d="M6 4V2.2A1.5 1.5 0 0 1 7.5 0.7h5A1.5 1.5 0 0 1 14 2.2V4" fill="none" stroke="#2f8cff" stroke-width="1.6"/><rect x="0" y="4" width="20" height="16" rx="2" fill="url(#tb)"/><path d="M0 10.5h20" stroke="#fff" stroke-width="1.6"/><rect x="7" y="7.8" width="6" height="6" rx="2" fill="#fff"/><rect x="9.2" y="9.6" width="1.6" height="2.4" fill="#2f6cf6"/></svg>
<div class="a" style="left:1121.6px;top:376.6px;width:146px;height:46px;border:2px solid #e5e6eb;border-radius:12px;background:#fff;box-shadow:0 2px 3px rgba(0,0,0,0.06)"></div>
<div class="a" style="left:1141.2px;top:386.3px;width:27.5px;height:27.5px;border-radius:50%;background:conic-gradient(from 20deg,#36d2e8,#1f8ef2 22%,#1a6af7 40%,#1458f8 52%,#2fd8e2 60%,#2a9cef 72%,#0b46f4 86%,#36d2e8)"></div>
<div class="a" style="left:1150.1px;top:395.2px;width:9.7px;height:9.7px;border-radius:50%;background:#fff"></div>
<div class="a" style="left:1177px;top:380.4px;font-size:24px;line-height:40px;color:#1d2129;font-weight:500;-webkit-text-stroke:0.7px #1d2129;">AI助手</div>
<div class="a" style="left:608px;top:431.7px;width:659.5px;height:475px;border:2px solid #e5e6eb;border-radius:8px;background:#fff"></div>
<div class="a" style="left:630px;top:450.2px;width:636px;height:36px;background:#fff;border:4px solid #ebebeb"></div>
<div class="a" style="left:634px;top:454.6px;font-size:24px;line-height:32px;color:#8a8c90;font-weight:400;">此数据集为数据源直连模式，需使用该数据源语法，具体</div>
<div class="a" style="left:634px;top:487.0px;font-size:24px;line-height:32px;color:#8a8c90;font-weight:400;">可参考右侧常用函数。</div>
<div class="a" style="left:608px;top:926.6px;font-size:26px;line-height:40px;color:#4e5969;font-weight:400;">字段描述</div>
<div class="a" style="left:608px;top:969px;width:659px;height:127.5px;border:2px solid #e5e6eb;border-radius:8px;background:#fff"></div>
<div class="a" style="left:635px;top:981.6px;font-size:26px;line-height:40px;color:#c0c4cc;font-weight:400;">请输入描述</div>
<div class="a" style="left:1043px;top:1046px;width:200px;text-align:right;font-size:24px;line-height:40px;color:#c0c4cc">0/5000</div>
<div class="a" style="left:1286px;top:661px;width:59px;height:59.5px;border:2px solid #dcdde0;border-radius:50%;background:#fff"></div>
<svg class="a" style="left:1308px;top:678px" width="18" height="26" viewBox="0 0 18 26" fill="none" stroke="#545b68" stroke-width="3.2" stroke-linecap="butt"><path d="M3.5 2.5l10.5 10.5-10.5 10.5"/></svg>
<div class="a" style="left:1346px;top:132.0px;font-size:24px;line-height:40px;color:#1d2129;font-weight:400;">常用函数</div>
<svg class="a" style="left:2160.5px;top:140px" width="20" height="20" viewBox="0 0 24 24" fill="none" stroke="#3370ff" stroke-width="2.2"><circle cx="12" cy="12" r="10.5"/><path d="M8.8 9.2a3.2 3.2 0 1 1 4.6 2.9c-.9.5-1.4 1-1.4 2v1" stroke-linecap="round"/><circle cx="12" cy="18.2" r="1.4" fill="#3370ff" stroke="none"/></svg>
<div class="a" style="left:2190px;top:130.0px;font-size:24px;line-height:40px;color:#3370ff;font-weight:400;">使用指南</div>
<div class="a" style="left:1347px;top:183px;width:938px;height:54px;border:2px solid #e5e6eb;border-radius:8px;background:#fff"></div>
<div class="a" style="left:1373px;top:190.0px;font-size:26px;line-height:40px;color:#c0c4cc;font-weight:400;">请输入函数名，函数用途</div>
<svg class="a" style="left:2231px;top:197px" width="26" height="26" viewBox="0 0 26 26" fill="none" stroke="#a9aeb8" stroke-width="3"><circle cx="11" cy="11" r="8.5"/><path d="M17.5 17.5l6.5 6.5" stroke-linecap="round"/></svg>
<div class="a" style="left:1346.5px;top:271px;width:438.5px;height:859.4px;border:2px solid #e5e6eb;border-radius:10px;background:#fff;overflow:hidden">
<div class="a" style="left:0;top:75.4px;width:407px;height:63px;background:#e8f3ff"></div>
<div class="a" style="left:405px;top:0;width:29px;height:860px;background:#fafafa;border-left:1px solid #ececec"></div>
<div class="a" style="left:413.6px;top:5.6px;width:16px;height:421.4px;background:#c1c1c1;border-radius:8px"></div>
</div>
<svg class="a" style="left:1371.3px;top:311.5px" width="12" height="8" viewBox="0 0 12 8"><path d="M0 0h12L6 8z" fill="#a9aeb8"/></svg>
<svg class="a" style="left:1413.4px;top:303px" width="26" height="22" viewBox="0 0 26 22"><path d="M1 3a2 2 0 0 1 2-2h6l2.5 2.5H21a2 2 0 0 1 2 2V8H1z" fill="#1a86e8"/><rect x="4" y="5" width="17" height="5" fill="#fff"/><path d="M0.5 9h25l-1.8 11a2 2 0 0 1-2 1.5H3.3a2 2 0 0 1-2-1.5z" fill="#3aa8ff"/></svg>
<div class="a" style="left:1449.6px;top:294.8px;font-size:24px;line-height:40px;color:#1d2129;font-weight:400;">Nullable处理函数</div>
<svg class="a" style="left:1443.6px;top:368.3px" width="21" height="21" viewBox="0 0 21 21"><rect width="21" height="21" fill="#5aaf7e"/><path d="M5 17.5c1.2 0 1.6-.8 2-2.6l1.6-8.2c.4-1.7 1-2.4 2.4-2.4M6.5 8.6h4" fill="none" stroke="#fff" stroke-width="2.3" stroke-linecap="round"/><path d="M11.5 9.5l5 6.5M16.5 9.5l-5 6.5" fill="none" stroke="#fff" stroke-width="2.2" stroke-linecap="round"/></svg>
<div class="a" style="left:1478px;top:358.8px;font-size:24px;line-height:40px;color:#1d2129;font-weight:400;-webkit-text-stroke:0.5px #1d2129;">isNan</div>
<svg class="a" style="left:1443.6px;top:432.3px" width="21" height="21" viewBox="0 0 21 21"><rect width="21" height="21" fill="#5aaf7e"/><path d="M5 17.5c1.2 0 1.6-.8 2-2.6l1.6-8.2c.4-1.7 1-2.4 2.4-2.4M6.5 8.6h4" fill="none" stroke="#fff" stroke-width="2.3" stroke-linecap="round"/><path d="M11.5 9.5l5 6.5M16.5 9.5l-5 6.5" fill="none" stroke="#fff" stroke-width="2.2" stroke-linecap="round"/></svg>
<div class="a" style="left:1478px;top:422.8px;font-size:24px;line-height:40px;color:#1d2129;font-weight:400;">assumeNotNull</div>
<svg class="a" style="left:1443.6px;top:496.3px" width="21" height="21" viewBox="0 0 21 21"><rect width="21" height="21" fill="#5aaf7e"/><path d="M5 17.5c1.2 0 1.6-.8 2-2.6l1.6-8.2c.4-1.7 1-2.4 2.4-2.4M6.5 8.6h4" fill="none" stroke="#fff" stroke-width="2.3" stroke-linecap="round"/><path d="M11.5 9.5l5 6.5M16.5 9.5l-5 6.5" fill="none" stroke="#fff" stroke-width="2.2" stroke-linecap="round"/></svg>
<div class="a" style="left:1478px;top:486.8px;font-size:24px;line-height:40px;color:#1d2129;font-weight:400;">coalesce</div>
<svg class="a" style="left:1443.6px;top:560.3px" width="21" height="21" viewBox="0 0 21 21"><rect width="21" height="21" fill="#5aaf7e"/><path d="M5 17.5c1.2 0 1.6-.8 2-2.6l1.6-8.2c.4-1.7 1-2.4 2.4-2.4M6.5 8.6h4" fill="none" stroke="#fff" stroke-width="2.3" stroke-linecap="round"/><path d="M11.5 9.5l5 6.5M16.5 9.5l-5 6.5" fill="none" stroke="#fff" stroke-width="2.2" stroke-linecap="round"/></svg>
<div class="a" style="left:1478px;top:550.8px;font-size:24px;line-height:40px;color:#1d2129;font-weight:400;">isNull</div>
<svg class="a" style="left:1443.6px;top:624.3px" width="21" height="21" viewBox="0 0 21 21"><rect width="21" height="21" fill="#5aaf7e"/><path d="M5 17.5c1.2 0 1.6-.8 2-2.6l1.6-8.2c.4-1.7 1-2.4 2.4-2.4M6.5 8.6h4" fill="none" stroke="#fff" stroke-width="2.3" stroke-linecap="round"/><path d="M11.5 9.5l5 6.5M16.5 9.5l-5 6.5" fill="none" stroke="#fff" stroke-width="2.2" stroke-linecap="round"/></svg>
<div class="a" style="left:1478px;top:614.8px;font-size:24px;line-height:40px;color:#1d2129;font-weight:400;">isNotNull</div>
<svg class="a" style="left:1373px;top:692.8px" width="9" height="14" viewBox="0 0 9 14"><path d="M1 1v12l7-6z" fill="#a9aeb8"/></svg>
<svg class="a" style="left:1413.4px;top:688.3px" width="26" height="21" viewBox="0 0 26 21"><path d="M1 2.5A1.5 1.5 0 0 1 2.5 1h6.5l2.5 2.5h12A1.5 1.5 0 0 1 25 5v2H1z" fill="#1a86e8"/><path d="M1 6h24v13a1.5 1.5 0 0 1-1.5 1.5h-21A1.5 1.5 0 0 1 1 19z" fill="#3aa8ff"/></svg>
<div class="a" style="left:1449.6px;top:678.8px;font-size:24px;line-height:40px;color:#1d2129;font-weight:400;">字符串函数</div>
<svg class="a" style="left:1373px;top:756.8px" width="9" height="14" viewBox="0 0 9 14"><path d="M1 1v12l7-6z" fill="#a9aeb8"/></svg>
<svg class="a" style="left:1413.4px;top:752.3px" width="26" height="21" viewBox="0 0 26 21"><path d="M1 2.5A1.5 1.5 0 0 1 2.5 1h6.5l2.5 2.5h12A1.5 1.5 0 0 1 25 5v2H1z" fill="#1a86e8"/><path d="M1 6h24v13a1.5 1.5 0 0 1-1.5 1.5h-21A1.5 1.5 0 0 1 1 19z" fill="#3aa8ff"/></svg>
<div class="a" style="left:1449.6px;top:742.8px;font-size:24px;line-height:40px;color:#1d2129;font-weight:400;">数学函数</div>
<svg class="a" style="left:1373px;top:820.8px" width="9" height="14" viewBox="0 0 9 14"><path d="M1 1v12l7-6z" fill="#a9aeb8"/></svg>
<svg class="a" style="left:1413.4px;top:816.3px" width="26" height="21" viewBox="0 0 26 21"><path d="M1 2.5A1.5 1.5 0 0 1 2.5 1h6.5l2.5 2.5h12A1.5 1.5 0 0 1 25 5v2H1z" fill="#1a86e8"/><path d="M1 6h24v13a1.5 1.5 0 0 1-1.5 1.5h-21A1.5 1.5 0 0 1 1 19z" fill="#3aa8ff"/></svg>
<div class="a" style="left:1449.6px;top:806.8px;font-size:24px;line-height:40px;color:#1d2129;font-weight:400;">算术函数</div>
<svg class="a" style="left:1373px;top:884.8px" width="9" height="14" viewBox="0 0 9 14"><path d="M1 1v12l7-6z" fill="#a9aeb8"/></svg>
<svg class="a" style="left:1413.4px;top:880.3px" width="26" height="21" viewBox="0 0 26 21"><path d="M1 2.5A1.5 1.5 0 0 1 2.5 1h6.5l2.5 2.5h12A1.5 1.5 0 0 1 25 5v2H1z" fill="#1a86e8"/><path d="M1 6h24v13a1.5 1.5 0 0 1-1.5 1.5h-21A1.5 1.5 0 0 1 1 19z" fill="#3aa8ff"/></svg>
<div class="a" style="left:1449.6px;top:870.8px;font-size:24px;line-height:40px;color:#1d2129;font-weight:400;">数组函数</div>
<svg class="a" style="left:1373px;top:948.8px" width="9" height="14" viewBox="0 0 9 14"><path d="M1 1v12l7-6z" fill="#a9aeb8"/></svg>
<svg class="a" style="left:1413.4px;top:944.3px" width="26" height="21" viewBox="0 0 26 21"><path d="M1 2.5A1.5 1.5 0 0 1 2.5 1h6.5l2.5 2.5h12A1.5 1.5 0 0 1 25 5v2H1z" fill="#1a86e8"/><path d="M1 6h24v13a1.5 1.5 0 0 1-1.5 1.5h-21A1.5 1.5 0 0 1 1 19z" fill="#3aa8ff"/></svg>
<div class="a" style="left:1449.6px;top:934.8px;font-size:24px;line-height:40px;color:#1d2129;font-weight:400;">其他函数</div>
<svg class="a" style="left:1373px;top:1012.8px" width="9" height="14" viewBox="0 0 9 14"><path d="M1 1v12l7-6z" fill="#a9aeb8"/></svg>
<svg class="a" style="left:1413.4px;top:1008.3px" width="26" height="21" viewBox="0 0 26 21"><path d="M1 2.5A1.5 1.5 0 0 1 2.5 1h6.5l2.5 2.5h12A1.5 1.5 0 0 1 25 5v2H1z" fill="#1a86e8"/><path d="M1 6h24v13a1.5 1.5 0 0 1-1.5 1.5h-21A1.5 1.5 0 0 1 1 19z" fill="#3aa8ff"/></svg>
<div class="a" style="left:1449.6px;top:998.8px;font-size:24px;line-height:40px;color:#1d2129;font-weight:400;">位操作函数</div>
<svg class="a" style="left:1373px;top:1076.8px" width="9" height="14" viewBox="0 0 9 14"><path d="M1 1v12l7-6z" fill="#a9aeb8"/></svg>
<svg class="a" style="left:1413.4px;top:1072.3px" width="26" height="21" viewBox="0 0 26 21"><path d="M1 2.5A1.5 1.5 0 0 1 2.5 1h6.5l2.5 2.5h12A1.5 1.5 0 0 1 25 5v2H1z" fill="#1a86e8"/><path d="M1 6h24v13a1.5 1.5 0 0 1-1.5 1.5h-21A1.5 1.5 0 0 1 1 19z" fill="#3aa8ff"/></svg>
<div class="a" style="left:1449.6px;top:1062.8px;font-size:24px;line-height:40px;color:#1d2129;font-weight:400;">聚合函数</div>
<div class="a" style="left:1833px;top:297.4px;font-size:20px;line-height:30px;color:#1d2129;font-weight:600;">函数说明</div>
<div class="a" style="left:1833px;top:339.9px;font-size:24px;line-height:36px;color:#1d2129;font-weight:600;">命令格式</div>
<div class="a" style="left:1833px;top:384.0px;font-size:24px;line-height:36px;color:#4e5969;font-weight:400;">isNan(x)</div>
<div class="a" style="left:1833px;top:444.5px;font-size:24px;line-height:36px;color:#1d2129;font-weight:600;">用途</div>
<div class="a" style="left:1833px;top:488.9px;font-size:24px;line-height:36px;color:#4e5969;font-weight:400;">检查参数是否为Nan,是nan返回1,不是返回</div>
<div class="a" style="left:1833px;top:524.2px;font-size:24px;line-height:36px;color:#4e5969;font-weight:400;">0</div>
<div class="a" style="left:1833px;top:584.4px;font-size:24px;line-height:36px;color:#1d2129;font-weight:600;">示例</div>
<div class="a" style="left:1833px;top:627.3px;font-size:24px;line-height:36px;color:#4e5969;font-weight:400;font-family:'Liberation Mono',monospace;">isNan(nan)</div>
<div class="a" style="left:1833px;top:663.0px;font-size:24px;line-height:36px;color:#4e5969;font-weight:400;">返回1</div>
<div class="a" style="left:2020px;top:1256px;width:107px;height:55px;border:2px solid #e5e6eb;border-radius:8px;background:#fff;box-shadow:0 2px 2px rgba(0,0,0,0.04)"></div>
<div class="a" style="left:2020px;top:1257px;width:107px;height:55px;text-align:center;font-size:28px;line-height:55px;font-weight:600;color:#1d2129">取消</div>
<div class="a" style="left:2168px;top:1256px;width:107.5px;height:55px;border-radius:8px;background:#2f6ff0;text-align:center;font-size:28px;line-height:57px;box-shadow:0 2px 2px rgba(0,0,0,0.06);font-weight:600;color:#fff">确定</div>
<!--/MODAL-CONTENT-->
</div>
</body></html>
